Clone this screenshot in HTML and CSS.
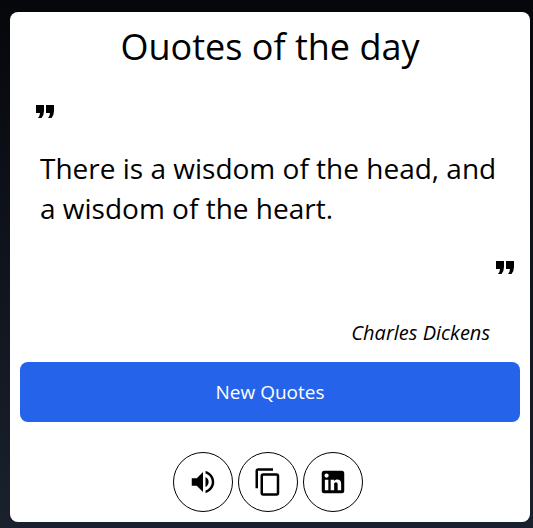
FILE: index.html
```html
<!DOCTYPE html>
<html lang="en">
<head>
<meta charset="utf-8">
<meta name="viewport" content="width=device-width, initial-scale=1">
<title>Ouotes of the day</title>
<link rel="stylesheet" href="styles.css">
</head>
<body>
<main class="card">
  <h1 class="title">Ouotes of the day</h1>
  <figure class="quote">
    <svg class="mark" viewBox="0 0 18 13" aria-hidden="true"><path d="M0 0H8V6Q8 10 5.500 13H2Q4 10.500 4 8H0ZM10 0H18V6Q18 10 15.500 13H12Q14 10.500 14 8H10Z"/></svg>
    <blockquote class="text">There is a wisdom of the head, and a wisdom of the heart.</blockquote>
    <svg class="mark mark-end" viewBox="0 0 18 13" aria-hidden="true"><path d="M0 0H8V6Q8 10 5.500 13H2Q4 10.500 4 8H0ZM10 0H18V6Q18 10 15.500 13H12Q14 10.500 14 8H10Z"/></svg>
    <figcaption class="author">Charles Dickens</figcaption>
  </figure>
  <button class="new" type="button">New Quotes</button>
  <div class="actions">
    <button class="round" type="button" aria-label="Listen">
      <svg class="icon" viewBox="0 0 24 24"><path d="M3 9v6h4l5 5V4L7 9H3zm13.500 3A4.500 4.500 0 0 0 14 7.970v8.050c1.480-.73 2.500-2.250 2.500-4.020zM14 3.230v2.060c2.890.86 5 3.540 5 6.710s-2.110 5.850-5 6.710v2.060c4.010-.91 7-4.490 7-8.770s-2.990-7.860-7-8.770z"/></svg>
    </button>
    <button class="round" type="button" aria-label="Copy">
      <svg class="icon" viewBox="0 0 24 24"><path d="M16 1H4c-1.100 0-2 .9-2 2v14h2V3h12V1zm3 4H8c-1.100 0-2 .9-2 2v14c0 1.100.9 2 2 2h11c1.100 0 2-.9 2-2V7c0-1.100-.9-2-2-2zm0 16H8V7h11v14z"/></svg>
    </button>
    <button class="round" type="button" aria-label="Share on LinkedIn">
      <svg class="icon" viewBox="0 0 24 24"><path d="M19 3a2 2 0 0 1 2 2v14a2 2 0 0 1-2 2H5a2 2 0 0 1-2-2V5a2 2 0 0 1 2-2h14m-.5 15.500v-5.300a3.260 3.260 0 0 0-3.260-3.260c-.85 0-1.840.52-2.320 1.300v-1.110h-2.790v8.370h2.790v-4.930c0-.77.62-1.400 1.390-1.400a1.400 1.400 0 0 1 1.400 1.400v4.930h2.790M6.880 8.560a1.680 1.680 0 0 0 1.680-1.680c0-.93-.75-1.690-1.680-1.690a1.690 1.690 0 0 0-1.690 1.690c0 .93.76 1.680 1.690 1.680m1.390 9.940v-8.370H5.500v8.370h2.770z"/></svg>
    </button>
  </div>
</main>
</body>
</html>
```
FILE: styles.css
```css
* {
  box-sizing: border-box;
  margin: 0;
}

body {
  min-height: 100vh;
  padding: 12px 3px 6px 10px;
  background: linear-gradient(#06070b, #1a212d);
  color: #000;
  font-family: "Segoe UI", "Open Sans", "Noto Sans", sans-serif;
}

.card {
  padding: 10px;
  border-radius: 8px;
  background: #fff;
}

.title {
  font-size: 36px;
  font-weight: 400;
  line-height: 50px;
  text-align: center;
}

.quote {
  display: flex;
  flex-direction: column;
  padding: 33px 6px 0 16px;
}

.mark {
  width: 18px;
  height: 13px;
}

.mark-end {
  align-self: flex-end;
}

.text {
  padding: 30px 0 33px 4px;
  font-size: 28px;
  line-height: 40px;
}

.author {
  padding: 44px 24px 14px 0;
  font-size: 20px;
  font-style: italic;
  line-height: 30px;
  text-align: right;
}

.new {
  display: block;
  width: 100%;
  height: 60px;
  border: 0;
  border-radius: 8px;
  background: #2563eb;
  color: #fff;
  font: inherit;
  font-size: 19px;
}

.actions {
  display: flex;
  justify-content: center;
  gap: 5px;
  padding: 30px 4px 0 0;
}

.round {
  display: grid;
  place-items: center;
  width: 60px;
  height: 60px;
  padding: 0;
  border: 1px solid #000;
  border-radius: 50%;
  background: #fff;
  color: #000;
}

.icon {
  width: 30px;
  height: 30px;
  fill: currentColor;
}
```
